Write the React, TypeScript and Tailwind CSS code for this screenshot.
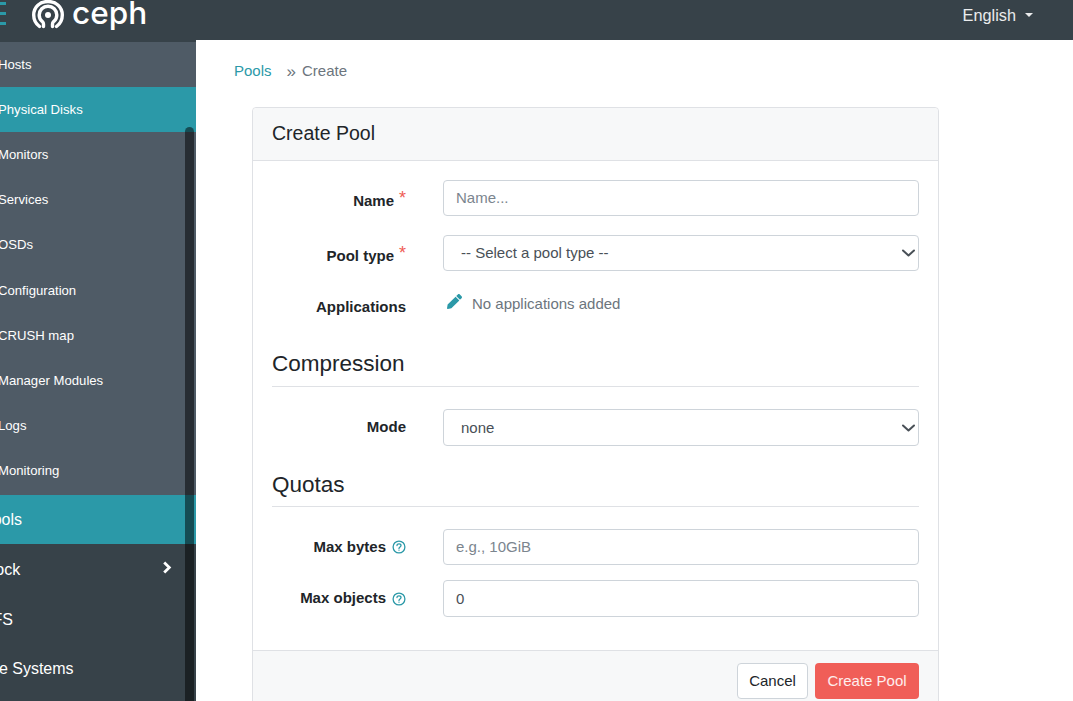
import React from "react";

const sub = ["Hosts", "Physical Disks", "Monitors", "Services", "OSDs", "Configuration", "CRUSH map", "Manager Modules", "Logs", "Monitoring"];

function Req() {
  return <span className="ml-[5px] text-[#ef5c55] font-normal text-[18px] leading-none relative -top-[3px]">*</span>;
}

function Help() {
  return (
    <svg viewBox="0 0 14 14" className="ml-[6px] w-[14px] h-[14px] shrink-0" fill="none" stroke="#2b99a8" strokeWidth="1.3">
      <circle cx="7" cy="7" r="5.9" />
      <path d="M5 5.500C5 4.300 5.900 3.800 7 3.800c1.200 0 2 .7 2 1.700 0 1.500-2 1.400-2 3" strokeLinecap="round" />
      <circle cx="7" cy="10.200" r=".6" fill="#2b99a8" stroke="none" />
    </svg>
  );
}

function Row({ label, children, className, labelClass }: { label: React.ReactNode; children: React.ReactNode; className?: string; labelClass?: string }) {
  return (
    <div className={"flex items-center " + (className ?? "")}>
      <div className={"w-[134px] shrink-0 flex justify-end items-center font-bold text-[#212529] text-[15px] " + (labelClass ?? "")}>{label}</div>
      <div className="ml-[37px] flex-1 relative">{children}</div>
    </div>
  );
}

function Chevron() {
  return (
    <svg viewBox="0 0 14 14" className="absolute right-[4px] top-1/2 -translate-y-1/2 w-[14px] h-[14px] pointer-events-none" fill="none" stroke="#495057" strokeWidth="2" strokeLinecap="round" strokeLinejoin="round">
      <path d="M2 4.500 7.500 9.500 13 4.500" />
    </svg>
  );
}

const inputCls = "block w-full h-[36px] rounded-[4px] border border-[#ced4da] bg-white px-3 text-[15px] text-[#495057] placeholder:text-[#7b858e] outline-none";
const selectCls = "block w-full rounded-[4px] border border-[#ced4da] bg-white pl-[17px] pt-px text-[15px] text-[#495057] appearance-none outline-none";

export default function App() {
  return (
    <div className="w-[1073px] h-[701px] overflow-hidden flex flex-col bg-white relative" style={{ fontFamily: '"Liberation Sans", Arial, sans-serif' }}>
      <header className="h-[40px] shrink-0 bg-[#374249] flex items-start text-white">
        <div className="w-[6px] mt-[2px] flex flex-col gap-[7px]">
          <div className="h-[3px] bg-[#2b99a8]" />
          <div className="h-[3px] bg-[#2b99a8]" />
          <div className="h-[3px] bg-[#2b99a8]" />
        </div>
        <svg viewBox="0 0 32 29" className="ml-[26px] w-[32px] h-[29px] shrink-0" fill="none" stroke="white" strokeWidth="3.400" strokeLinecap="round">
          <path d="M7.500 26.500C3.500 23.500 1.700 19.500 1.700 15 1.700 7 8 1.500 16 1.500S30.300 7 30.300 15c0 4.500-1.800 8.500-5.800 11.500" />
          <path d="M11.500 26.500V24c0-1.500-.8-2-1.500-2.700-1.800-1.600-2.800-3.700-2.800-6.300A8.800 8.800 0 0 1 24.800 15c0 2.600-1 4.700-2.800 6.300-.7.7-1.500 1.200-1.500 2.700v2.500" />
          <circle cx="16" cy="15" r="3" fill="white" stroke="none" />
        </svg>
        <span className="ml-[8px] text-[31.500px] leading-[26px] font-medium" style={{ fontFamily: "Inter, sans-serif" }}>ceph</span>
        <div className="ml-auto mr-[40px] mt-[6px] flex items-center text-[16.300px] text-white/90 leading-[18px]">
          English
          <span className="ml-[9px] w-0 h-0 border-x-[4px] border-x-transparent border-t-[4px] border-t-white/90" />
        </div>
      </header>
      <div className="flex-1 flex min-h-0">
        <nav className="w-[196px] shrink-0 bg-[#374249] text-white overflow-hidden relative pt-[2px]">
          <div className="bg-[#4f5b66] pb-px">
            {sub.map((s) => (
              <div key={s} className={"h-[45.200px] flex items-center text-[13.150px] -ml-[2px] " + (s === "Physical Disks" ? "bg-[#2b99a8]" : "")}>{s}</div>
            ))}
          </div>
          <div className="h-[49px] pt-[2px] bg-[#2b99a8] flex items-center text-[16px] -ml-[18px]">Pools</div>
          <div className="h-[50px] pt-[3px] flex items-center justify-between text-[16px] -ml-[19px] pr-[24px]">
            Block
            <svg viewBox="0 0 10 14" className="w-[10px] h-[13px] -mt-[6px]" fill="none" stroke="white" strokeWidth="3"><path d="M2 1.500 7.500 7 2 12.500" /></svg>
          </div>
          <div className="h-[50px] pt-[2px] flex items-center text-[16px] -ml-[19px]">NFS</div>
          <div className="h-[50px] flex items-center text-[16px] -ml-[18px]">File Systems</div>
          <div className="absolute left-[185px] top-[87px] bottom-0 w-[9px] rounded-t-[5px] bg-black/50" />
        </nav>
        <main className="flex-1 min-w-0 pl-[38px] pr-[134px]">
          <div className="mt-[21px] h-[20px] flex items-center text-[15px] text-[#6c757d]">
            <span className="text-[#2b99a8]">Pools</span>
            <span className="ml-[15px] mr-[6px] text-[17px] leading-none">»</span>
            <span>Create</span>
          </div>
          <section className="mt-[26px] ml-[18px] border border-[#dfe1e5] rounded-[4px] h-[640px]">
            <div className="h-[53px] pb-px px-[19px] flex items-center bg-[#f7f8f9] border-b border-[#dfe1e5] text-[19.500px] text-[#212529] rounded-t-[4px]">Create Pool</div>
            <div className="h-[489px] px-[19px] pt-[19px]">
              <Row label={<>Name<Req /></>} labelClass="pt-[6px]">
                <input className={inputCls + " pb-[2px]"} placeholder="Name..." />
              </Row>
              <Row label={<>Pool type<Req /></>} labelClass="pt-[6px]" className="mt-[19px]">
                <select className={selectCls + " h-[36px]"} defaultValue="">
                  <option value="">-- Select a pool type --</option>
                </select>
                <Chevron />
              </Row>
              <Row label="Applications" className="mt-[16px] h-[40px]">
                <div className="flex items-center text-[15px] text-[#6c757d] -mt-[6px]">
                  <svg viewBox="0 0 512 512" className="ml-[4px] w-[15px] h-[15px] -mt-[6px]" fill="#2b99a8">
                    <path d="M497.900 142.100l-46.100 46.100c-4.700 4.700-12.300 4.700-17 0l-111-111c-4.700-4.700-4.700-12.300 0-17l46.100-46.100c18.700-18.700 49.100-18.700 67.900 0l60.100 60.100c18.800 18.700 18.800 49.100 0 67.900zM284.200 99.800L21.600 362.400.4 483.900c-2.900 16.400 11.400 30.600 27.800 27.800l121.500-21.300 262.600-262.600c4.700-4.700 4.700-12.300 0-17l-111-111c-4.800-4.700-12.400-4.700-17.100 0z" />
                  </svg>
                  <span className="ml-[10px]">No applications added</span>
                </div>
              </Row>
              <h2 className="mt-[23px] h-[37px] border-b border-[#dfe1e5] text-[22.500px] leading-[28px] text-[#212529]">Compression</h2>
              <Row label="Mode" className="mt-[22px]">
                <select className={selectCls + " h-[37px]"} defaultValue="none">
                  <option value="none">none</option>
                </select>
                <Chevron />
              </Row>
              <h2 className="mt-[22px] h-[39px] border-b border-[#dfe1e5] text-[22.500px] leading-[34px] text-[#212529]">Quotas</h2>
              <Row label={<>Max bytes<Help /></>} className="mt-[22px]">
                <input className={inputCls + " pb-[2px]"} placeholder="e.g., 10GiB" />
              </Row>
              <Row label={<>Max objects<Help /></>} className="mt-[15px]">
                <input className={inputCls + " h-[37px]"} defaultValue="0" />
              </Row>
            </div>
            <div className="h-[96px] bg-[#f7f8f9] border-t border-[#dfe1e5] flex justify-end items-start gap-[7px] pt-[12px] px-[19px]">
              <button className="h-[36px] w-[71px] rounded-[4px] bg-white border border-[#ced4da] text-[15px] text-[#212529]">Cancel</button>
              <button className="h-[36px] w-[104px] rounded-[4px] bg-[#f05e58] text-[15px] text-white/90">Create Pool</button>
            </div>
          </section>
        </main>
      </div>
    </div>
  );
}
